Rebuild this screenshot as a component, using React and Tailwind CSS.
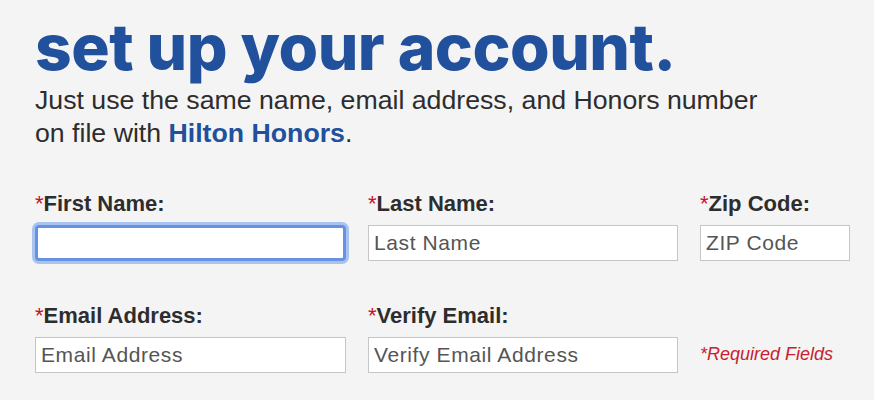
import { useState } from 'react'

const BODY = { fontFamily: '"Liberation Sans", Arial, Helvetica, sans-serif' }

function Field({ label, placeholder, focused, value, onChange }) {
  return (
    <div className="flex flex-col">
      <label className="h-[26px] text-[22px] leading-[26px] font-bold text-[#2d2d2d] whitespace-nowrap">
        <span className="text-[#c8102e] font-normal">*</span>
        {label}
      </label>
      <input
        type="text"
        value={value}
        onChange={onChange}
        placeholder={placeholder}
        className={
          focused
            ? 'mt-[8px] h-[36px] w-full bg-white px-[4px] text-[21px] tracking-[0.6px] text-[#333] placeholder:text-[#555] rounded-[4px] border-[3px] border-[#6792e3] ring-[3px] ring-[#a9c3f1] outline-none'
            : 'mt-[8px] h-[36px] w-full bg-white px-[5px] text-[21px] tracking-[0.6px] text-[#333] placeholder:text-[#555] border border-[#c6c6c6] outline-none'
        }
      />
    </div>
  )
}

export default function App() {
  const [form, setForm] = useState({ first: '', last: '', zip: '', email: '', verify: '' })
  const set = k => e => setForm(f => ({ ...f, [k]: e.target.value }))

  return (
    <div className="min-h-[400px] w-full bg-[#f4f4f4] pl-[35px] pt-[15px]" style={BODY}>
      {/* ── Heading ── */}
      <h1
        className="text-[64px] leading-[64px] font-extrabold text-[#21509c] tracking-[-0.5px] whitespace-nowrap"
        style={{ fontFamily: 'Inter, "Liberation Sans", sans-serif' }}
      >
        set up your account.
      </h1>
      <p className="mt-[5px] text-[26.7px] leading-[33px] text-[#2d2d2d]">
        Just use the same name, email address, and Honors number
        <br />
        on file with <span className="font-bold text-[#21509c]">Hilton Honors</span>.
      </p>

      {/* ── Form ── */}
      <div className="mt-[41px] grid grid-cols-[311px_310px_150px] gap-x-[22px] gap-y-[42px]">
        <Field label="First Name:" focused value={form.first} onChange={set('first')} />
        <Field label="Last Name:" placeholder="Last Name" value={form.last} onChange={set('last')} />
        <Field label="Zip Code:" placeholder="ZIP Code" value={form.zip} onChange={set('zip')} />
        <Field label="Email Address:" placeholder="Email Address" value={form.email} onChange={set('email')} />
        <Field label="Verify Email:" placeholder="Verify Email Address" value={form.verify} onChange={set('verify')} />
        <div className="flex flex-col">
          <div className="h-[26px]" />
          <p className="mt-[8px] h-[36px] flex items-center pb-[2px] text-[18px] italic text-[#c8202f] whitespace-nowrap">
            *Required Fields
          </p>
        </div>
      </div>
    </div>
  )
}
